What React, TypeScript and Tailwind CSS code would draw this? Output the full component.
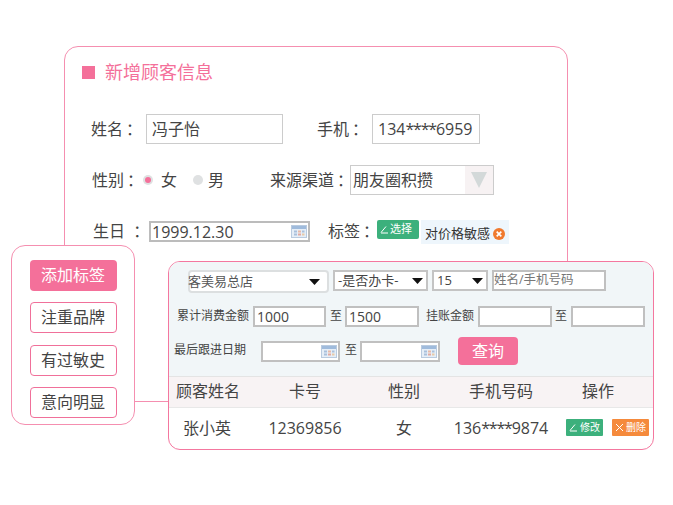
const CalendarIcon = () => (
  <svg width="16" height="13" viewBox="0 0 16 13" className="shrink-0">
    <rect x="0.5" y="0.5" width="15" height="12" fill="#e6eef7" stroke="#b9cbe0" />
    <rect x="1" y="1" width="14" height="3" fill="#9fbbdc" />
    <rect x="3" y="5.5" width="3" height="2" fill="#a9c0dc" />
    <rect x="7" y="5.5" width="3" height="2" fill="#e8b9a8" />
    <rect x="11" y="5.5" width="2.5" height="2" fill="#a9c0dc" />
    <rect x="3" y="8.5" width="3" height="2" fill="#a9c0dc" />
    <rect x="7" y="8.5" width="3" height="2" fill="#e3a9a0" />
    <rect x="11" y="8.5" width="2.5" height="2" fill="#e8c9a8" />
  </svg>
);

const Caret = () => (
  <svg width="11" height="6" viewBox="0 0 11 6" className="shrink-0">
    <path d="M0 0h11L5.500 6z" fill="#111" />
  </svg>
);

const Pencil = () => (
  <svg width="9" height="9" viewBox="0 0 9 9" className="shrink-0">
    <path d="M1 7.500 6 1.500M1 8h7" stroke="#fff" strokeWidth="1" fill="none" />
  </svg>
);

const SmallSelect = ({ text, className }: { text: string; className: string }) => (
  <div className={`flex items-center justify-between border-2 border-[#c4c4c4] bg-white text-[#444] text-[13px] ${className}`}>
    <span>{text}</span>
    <Caret />
  </div>
);

const Field = ({ text, className }: { text?: string; className: string }) => (
  <div className={`flex items-center h-[21px] border-2 border-[#c0c0c0] bg-white text-[14px] text-[#444] pl-[2px] ${className}`}>{text}</div>
);

const DateField = ({ className }: { className: string }) => (
  <div className={`flex items-center justify-end h-[21px] border-2 border-[#c0c0c0] bg-white pr-[1px] ${className}`}>
    <CalendarIcon />
  </div>
);

// colon sits further from the text than the CJK font sets it
const Label = ({ text, className }: { text: string; className: string }) => (
  <span className={`whitespace-nowrap ${className}`}>
    {text}
    <span className="ml-[3px]">：</span>
  </span>
);

// the stars are narrower in the picture than in the font
const Masked = ({ start, end }: { start: string; end: string }) => (
  <span>
    {start}
    <span className="tracking-[-1.2px]">****</span>
    {end}
  </span>
);

const tags = ["注重品牌", "有过敏史", "意向明显"];

const cols = "grid grid-cols-[78px_116px_82px_112px_95px] items-center";

export default function App() {
  return (
    <div
      className="relative w-[673px] h-[505px] overflow-hidden bg-white text-[#444]"
      style={{ fontFamily: '"Open Sans", "Noto Sans CJK SC", sans-serif' }}
    >
      {/* Customer form */}
      <div className="absolute left-[64px] top-[46px] w-[504px] h-[356px] border border-[#f58fb0] rounded-[14px] bg-white">
        <div className="flex items-center mt-[12px] ml-[17px]">
          <div className="w-[13px] h-[13px] bg-[#f4709a]" />
          <span className="ml-[10px] text-[18px] leading-[26px] text-[#f4709a]">新增顾客信息</span>
        </div>

        <div className="flex items-center mt-[29px] ml-[26px] text-[16px]">
          <Label text="姓名" className="w-[55px]" />
          <div className="flex items-center w-[137px] h-[30px] border border-[#ccc] pl-[5px]">冯子怡</div>
          <Label text="手机" className="ml-[34px] w-[55px]" />
          <div className="flex items-center w-[108px] h-[30px] border border-[#ccc] pl-[5px]">
            <Masked start="134" end="6959" />
          </div>
        </div>

        <div className="flex items-center mt-[21px] ml-[27px] text-[16px]">
          <Label text="性别" className="w-[51px] pb-[1px]" />
          <div className="w-[10px] h-[10px] rounded-full bg-[#dfe1e2] flex items-center justify-center">
            <div className="w-[6px] h-[6px] rounded-full bg-[#f4709a]" />
          </div>
          <span className="ml-[8px] pb-[1px]">女</span>
          <div className="ml-[16px] w-[10px] h-[10px] rounded-full bg-[#dfe1e2]" />
          <span className="ml-[5px] pb-[1px]">男</span>
          <Label text="来源渠道" className="ml-[46px] w-[80px] pb-[1px]" />
          <div className="flex items-center justify-between w-[144px] h-[30px] border border-[#ccc] pl-[2px]">
            <span className="pb-[1px]">朋友圈积攒</span>
            <div className="flex items-center justify-center w-[28px] h-full bg-[#f7f2f3]">
              <svg width="16" height="16" viewBox="0 0 16 16">
                <path d="M0 0h16L8 16z" fill="#d3d9d9" />
              </svg>
            </div>
          </div>
        </div>

        <div className="flex items-start mt-[25px] ml-[28px] text-[16px]">
          <span className="w-[56px] mt-[-1px] whitespace-pre">生日  ：</span>
          <div className="flex items-center justify-between w-[161px] h-[21px] mt-[1px] border-2 border-[#bcbcbc] pl-[1px] pr-[1px] leading-none">
            <span>1999.12.30</span>
            <CalendarIcon />
          </div>
          <Label text="标签" className="ml-[18px] mt-[-1px] w-[49px]" />
          <div className="flex items-center gap-[1px] w-[42px] h-[19px] pl-[3px] rounded-[2px] bg-[#3cb07c] text-white text-[11px]">
            <Pencil />
            选择
          </div>
          <div className="flex items-center ml-[2px] w-[88px] h-[24px] bg-[#eef6fc] pl-[4px] pt-[3px] text-[13px] text-[#333]">
            对价格敏感
            <svg width="12" height="12" viewBox="0 0 13 13" className="ml-[3px]">
              <circle cx="6.500" cy="6.500" r="6.500" fill="#f07a2f" />
              <path d="M4 4l5 5M9 4l-5 5" stroke="#fff" strokeWidth="1.800" />
            </svg>
          </div>
        </div>
      </div>

      {/* Tag list */}
      <div className="absolute left-[11px] top-[245px] w-[124px] h-[180px] flex flex-col border border-[#f58fb0] rounded-[14px] bg-white pl-[18px] pt-[14px]">
        <div className="flex items-center justify-center w-[87px] h-[31px] pr-[1px] pb-[1px] rounded-[4px] bg-[#f4709a] text-white text-[16px]">添加标签</div>
        {tags.map((tag, index) => (
          <div
            key={tag}
            className={`flex items-center justify-center w-[87px] h-[31px] pr-[1px] pb-[1px] rounded-[4px] border border-[#f0709a] text-[16px] ${index === 1 ? "mt-[12px]" : "mt-[11px]"}`}
          >
            {tag}
          </div>
        ))}
      </div>

      {/* Customer query */}
      <div className="absolute left-[168px] top-[261px] w-[486px] h-[189px] border border-[#f4779f] rounded-[12px] bg-white overflow-hidden">
        <div className="h-[115px] bg-[#f1f6f8] border-b border-[#e4e4e4] pt-[8px]">
          <div className="flex items-start ml-[19px]">
            <div className="flex items-center justify-between w-[141px] h-[23px] rounded-[4px] border-2 border-[#dcdfe0] bg-white pr-[7px] text-[13px] text-[#555]">
              <span className="ml-[-2px]">客美易总店</span>
              <Caret />
            </div>
            <SmallSelect text="-是否办卡-" className="ml-[4px] w-[95px] h-[21px] pl-[3px] pr-[3px]" />
            <SmallSelect text="15" className="ml-[4px] w-[56px] h-[21px] pl-[3px] pr-[3px]" />
            <div className="flex items-center ml-[4px] w-[114px] h-[21px] border-2 border-[#c0c0c0] bg-white text-[12.5px] text-[#777]">姓名/手机号码</div>
          </div>

          <div className="flex items-center mt-[13px] ml-[8px] text-[12px]">
            <span className="w-[76px] pb-[2px]">累计消费金额</span>
            <Field text="1000" className="w-[73px]" />
            <span className="ml-[4px] w-[15px] pb-[2px]">至</span>
            <Field text="1500" className="w-[74px]" />
            <span className="ml-[7px] w-[52px] pb-[2px]">挂账金额</span>
            <Field className="w-[74px]" />
            <span className="ml-[3px] w-[16px] pb-[2px]">至</span>
            <Field className="w-[74px]" />
          </div>

          <div className="flex items-center mt-[10px] ml-[5px] text-[12px]">
            <span className="w-[87px] pb-[2px]">最后跟进日期</span>
            <DateField className="w-[79px]" />
            <span className="ml-[5px] w-[15px] pb-[2px]">至</span>
            <DateField className="w-[80px]" />
            <div className="flex items-center justify-center ml-[18px] w-[60px] h-[28px] rounded-[4px] bg-[#f4709a] text-white text-[16px]">查询</div>
          </div>
        </div>

        <div className={`${cols} h-[31px] pb-[2px] bg-[#f8f3f4] border-b border-[#e8e8e8] text-[16px] text-center`}>
          <span>顾客姓名</span>
          <span>卡号</span>
          <span>性别</span>
          <span>手机号码</span>
          <span className="text-left pl-[25px]">操作</span>
        </div>
        <div className={`${cols} h-[41px] pb-[2px] text-[16px] text-center`}>
          <span className="pr-[2px]">张小英</span>
          <span>12369856</span>
          <span>女</span>
          <Masked start="136" end="9874" />
          <div className="flex items-center gap-[9px] pl-[9px] text-[10px] text-white">
            <div className="flex items-center justify-center gap-[2px] w-[37px] h-[17px] rounded-[1px] bg-[#3cb07c]">
              <Pencil />
              修改
            </div>
            <div className="flex items-center justify-center gap-[2px] w-[37px] h-[17px] rounded-[1px] bg-[#f58a3c]">
              <svg width="9" height="9" viewBox="0 0 9 9" className="shrink-0">
                <path d="M1 1l7 7M8 1l-7 7" stroke="#fff" strokeWidth="1" />
              </svg>
              删除
            </div>
          </div>
        </div>
      </div>
    </div>
  );
}
